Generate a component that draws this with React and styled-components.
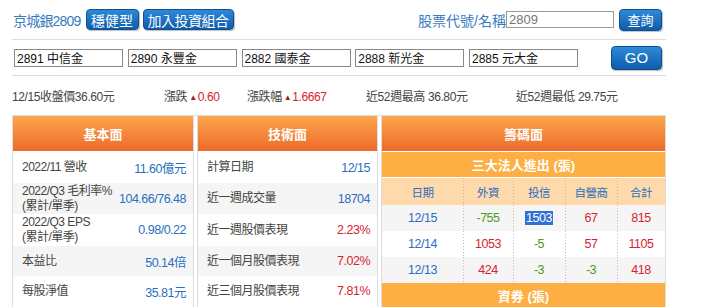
import styled, { createGlobalStyle } from "styled-components";

const GlobalStyle = createGlobalStyle`
  body {
    margin: 0;
    background: #fff;
    font-family: "Liberation Sans", Arial, "Noto Sans CJK TC", sans-serif;
    color: #444;
  }
`;

const Page = styled.div`
  width: 654px;
  padding-left: 12px;
`;

const TopBar = styled.div`
  display: flex;
  align-items: center;
  height: 39px;
  border-bottom: 1px solid #ddd;
`;

const Title = styled.span`
  font-size: 14px;
  letter-spacing: -0.8px;
  color: #3a7bc2;
  margin-left: 1px;
  margin-right: 5px;
`;

const BlueButton = styled.button`
  font-family: inherit;
  font-size: ${(p) => p.size || 14}px;
  letter-spacing: ${(p) => (p.tight ? "-0.5px" : "0")};
  color: #fff;
  border: 1px solid #0d4f93;
  border-radius: 4px;
  background: linear-gradient(#2d8ad9, #0f5cab);
  box-shadow: 1px 1px 1px rgba(0, 0, 0, 0.25);
  height: ${(p) => p.h || 21}px;
  width: ${(p) => (p.w ? p.w + "px" : "auto")};
  padding: 0 4px;
  margin-right: 4px;
  cursor: pointer;
`;

const Spacer = styled.div`
  flex: 1;
`;

const SearchLabel = styled.span`
  font-size: 14px;
  color: #3a7bc2;
`;

const SearchInput = styled.input`
  font-family: inherit;
  font-size: 13px;
  color: #777;
  width: 102px;
  height: 15px;
  padding: 0 2px;
  border: 1px solid #999;
  margin-right: 5px;
`;

const CompareRow = styled.div`
  display: flex;
  align-items: center;
  height: 35px;
  border-bottom: 1px solid #ddd;
  gap: 4.75px;
`;

const CompareInput = styled.input`
  font-family: inherit;
  font-size: 12px;
  color: #111;
  width: 103px;
  height: 16px;
  padding: 0 2px;
  border: 1px solid #888;
  &:first-child {
    margin-left: 2px;
  }
`;

const InfoRow = styled.div`
  display: flex;
  align-items: center;
  height: 39px;
  font-size: 12px;
  letter-spacing: -0.4px;
  color: #444;
`;

const InfoItem = styled.span`
  width: ${(p) => p.w}px;
  flex: none;
`;

const Up = styled.span`
  color: #d9232e;
`;

const Tri = styled.span`
  color: #a31e22;
  font-size: 8px;
  margin: 0 1px 0 2px;
  vertical-align: 1px;
`;

const Panels = styled.div`
  display: grid;
  grid-template-columns: 182px 181px 285px;
  gap: 3px;
  border-top: 1px solid #ddd;
`;

const Column = styled.div`
  border-left: 1px solid #ddd;
  border-right: 1px solid #ddd;
  display: flex;
  flex-direction: column;
`;

const Header = styled.div`
  height: 35px;
  display: flex;
  align-items: center;
  justify-content: center;
  background: linear-gradient(#fda64a, #ec6a2b);
  color: #fff;
  font-size: 13px;
  font-weight: bold;
  border-bottom: 1px solid #fff;
`;

const Row = styled.div`
  display: flex;
  justify-content: space-between;
  align-items: center;
  height: ${(p) => p.h || 31}px;
  padding: 0 7px 0 9px;
  background: ${(p) => (p.alt ? "#f5f5f5" : "#fff")};
  font-size: 12px;
  letter-spacing: -0.5px;
  white-space: nowrap;
`;

const Label = styled.span`
  color: #444;
  line-height: 15px;
`;

const Value = styled.span`
  color: ${(p) => (p.red ? "#d9232e" : "#2a6fc0")};
  font-size: 12.5px;
`;

const SubHeader = styled.div`
  height: 25px;
  display: flex;
  align-items: center;
  justify-content: center;
  background: #fdaf44;
  color: #fff;
  font-size: 13px;
  font-weight: bold;
  border-bottom: 1px solid #fff;
`;

const Grid = styled.div`
  display: grid;
  grid-template-columns: 81px 50px 52px 52px 1fr;
  height: ${(p) => p.h || 26}px;
  background: ${(p) => p.bg};
  font-size: ${(p) => (p.head ? 11.5 : 12.5)}px;
  letter-spacing: -0.5px;
`;

const Cell = styled.div`
  display: flex;
  align-items: center;
  justify-content: center;
  color: ${(p) => p.c};
  & + & {
    border-left: ${(p) => (p.head ? "1px solid #fff" : "none")};
    background-image: ${(p) =>
      p.head ? "none" : "linear-gradient(#bbb 50%, transparent 50%)"};
    background-size: 1px 3px;
    background-repeat: repeat-y;
    background-position: 0 3px;
  }
`;

const Selected = styled.span`
  background: #3370d6;
  color: #fff;
  padding: 0 1px;
`;

const fundamentals = [
  { label: "2022/11 營收", value: "11.60億元" },
  { label: ["2022/Q3 毛利率%", "(累計/單季)"], value: "104.66/76.48", alt: true },
  { label: ["2022/Q3 EPS", "(累計/單季)"], value: "0.98/0.22" },
  { label: "本益比", value: "50.14倍", alt: true },
  { label: "每股淨值", value: "35.81元" },
];

const technicals = [
  { label: "計算日期", value: "12/15" },
  { label: "近一週成交量", value: "18704", alt: true },
  { label: "近一週股價表現", value: "2.23%", red: true },
  { label: "近一個月股價表現", value: "7.02%", red: true, alt: true },
  { label: "近三個月股價表現", value: "7.81%", red: true },
];

const heights = [31, 31, 32, 30, 30];

const BLUE = "#2a6fc0";
const RED = "#d9232e";
const GREEN = "#4f9a1c";

const chips = [
  { bg: "#f5f5f5", cells: [["12/15", BLUE], ["-755", GREEN], ["1503", "sel"], ["67", RED], ["815", RED]] },
  { bg: "#fff", cells: [["12/14", BLUE], ["1053", RED], ["-5", GREEN], ["57", RED], ["1105", RED]] },
  { bg: "#f5f5f5", cells: [["12/13", BLUE], ["424", RED], ["-3", GREEN], ["-3", GREEN], ["418", RED]] },
];

function renderLabel(label) {
  if (Array.isArray(label)) {
    return (
      <Label>
        {label[0]}
        <br />
        {label[1]}
      </Label>
    );
  }
  return <Label>{label}</Label>;
}

export default function App() {
  return (
    <Page>
      <GlobalStyle />
      <TopBar>
        <Title>京城銀2809</Title>
        <BlueButton w={53}>穩健型</BlueButton>
        <BlueButton tight>加入投資組合</BlueButton>
        <Spacer />
        <SearchLabel>股票代號/名稱</SearchLabel>
        <SearchInput defaultValue="2809" />
        <BlueButton size={13} w={43} h={22}>
          查詢
        </BlueButton>
      </TopBar>
      <CompareRow>
        <CompareInput defaultValue="2891 中信金" />
        <CompareInput defaultValue="2890 永豐金" />
        <CompareInput defaultValue="2882 國泰金" />
        <CompareInput defaultValue="2888 新光金" />
        <CompareInput defaultValue="2885 元大金" />
        <Spacer />
        <BlueButton size={15} w={51} h={24}>
          GO
        </BlueButton>
      </CompareRow>
      <InfoRow>
        <InfoItem w={152}>12/15收盤價36.60元</InfoItem>
        <InfoItem w={83}>
          漲跌<Tri>▲</Tri>
          <Up>0.60</Up>
        </InfoItem>
        <InfoItem w={119}>
          漲跌幅<Tri>▲</Tri>
          <Up>1.6667</Up>
        </InfoItem>
        <InfoItem w={150}>近52週最高 36.80元</InfoItem>
        <InfoItem w={150}>近52週最低 29.75元</InfoItem>
      </InfoRow>
      <Panels>
        <Column>
          <Header>基本面</Header>
          {fundamentals.map((r, i) => (
            <Row key={i} alt={r.alt} h={heights[i]}>
              {renderLabel(r.label)}
              <Value>{r.value}</Value>
            </Row>
          ))}
        </Column>
        <Column>
          <Header>技術面</Header>
          {technicals.map((r, i) => (
            <Row key={i} alt={r.alt} h={heights[i]}>
              {renderLabel(r.label)}
              <Value red={r.red}>{r.value}</Value>
            </Row>
          ))}
        </Column>
        <Column>
          <Header>籌碼面</Header>
          <SubHeader>三大法人進出 (張)</SubHeader>
          <Grid bg="#fdd9ab" h={27} head>
            {["日期", "外資", "投信", "自營商", "合計"].map((h) => (
              <Cell key={h} head c={BLUE}>
                {h}
              </Cell>
            ))}
          </Grid>
          {chips.map((r, i) => (
            <Grid key={i} bg={r.bg}>
              {r.cells.map(([t, c], j) => (
                <Cell key={j} c={c}>
                  {c === "sel" ? <Selected>{t}</Selected> : t}
                </Cell>
              ))}
            </Grid>
          ))}
          <SubHeader>資券 (張)</SubHeader>
        </Column>
      </Panels>
    </Page>
  );
}
